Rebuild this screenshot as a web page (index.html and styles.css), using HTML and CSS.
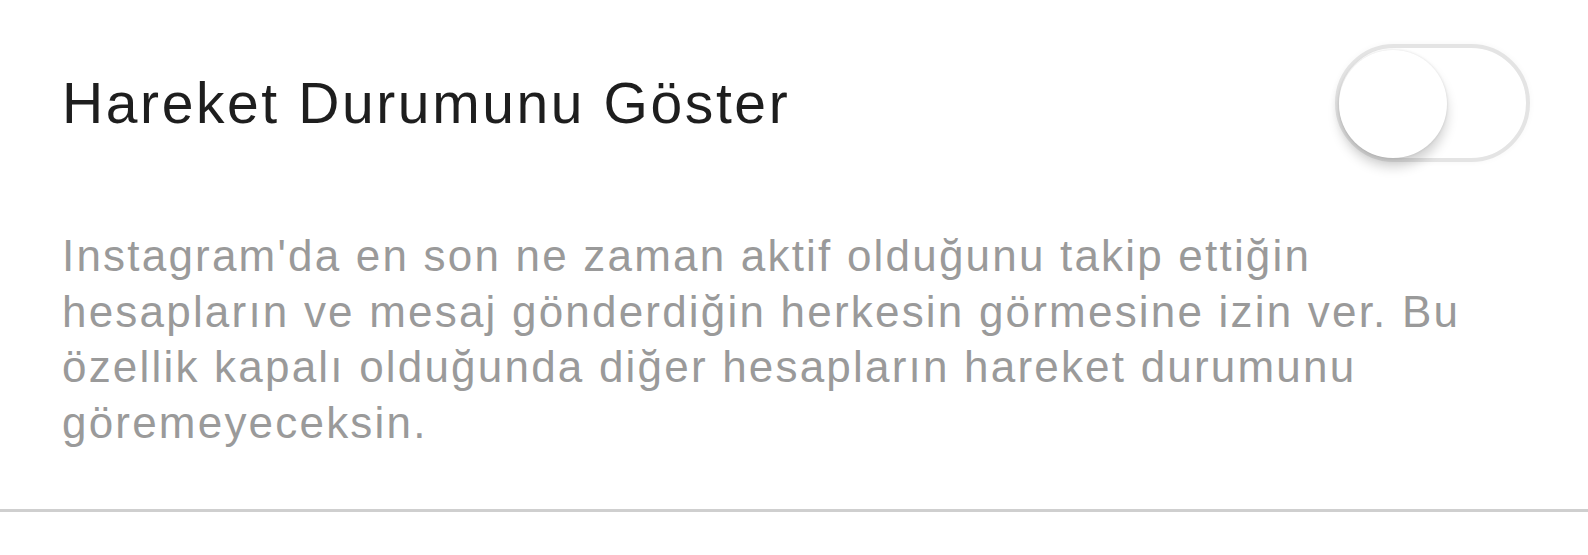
FILE: index.html
```html
<!DOCTYPE html>
<html lang="tr">
<head>
    <title>Hareket Durumu</title>
    <meta charset="UTF-8">
    <meta name="viewport" content="width=device-width, initial-scale=1.0">
    <link rel="stylesheet" href="styles.css">
</head>
<body>
    <div class="setting">
        <div class="setting-row">
            <span class="setting-title">Hareket Durumunu Göster</span>
            <label class="switch">
                <input type="checkbox" id="activity-status">
                <span class="switch-track"><span class="switch-knob"></span></span>
            </label>
        </div>
        <p class="setting-description">
            Instagram'da en son ne zaman aktif olduğunu takip ettiğin<br>
            hesapların ve mesaj gönderdiğin herkesin görmesine izin ver. Bu<br>
            özellik kapalı olduğunda diğer hesapların hareket durumunu<br>
            göremeyeceksin.
        </p>
    </div>
</body>
</html>
```

FILE: styles.css
```css
body, html {
    margin: 0;
    padding: 0;
    box-sizing: border-box;
}

*, *:before, *:after {
    box-sizing: inherit;
}

body {
    font-family: "Liberation Sans", Arial, sans-serif;
    background-color: #fff;
    color: #222;
}

.setting {
    padding: 44px 58px 0 62px;
    border-bottom: 3px solid #cfcfcf;
}

.setting-row {
    display: flex;
    justify-content: space-between;
    align-items: center;
    height: 118px;
}

.setting-title {
    font-size: 57px;
    letter-spacing: 2.6px;
    color: #1e1e1e;
}

.setting-description {
    margin: 66px 0 0;
    padding-bottom: 59px;
    font-size: 44px;
    line-height: 55.5px;
    letter-spacing: 2.2px;
    color: #9a9a9a;
}

/* iOS style switch, shown in the off state */
.switch {
    position: relative;
    display: block;
    width: 195px;
    height: 118px;
    cursor: pointer;
}

.switch input {
    display: none;
}

.switch-track {
    display: block;
    width: 100%;
    height: 100%;
    border: 4px solid #e4e4e4;
    border-radius: 59px;
    background-color: #fff;
    box-shadow: 0 0 6px rgba(0, 0, 0, 0.04);
}

.switch-knob {
    position: absolute;
    left: 4px;
    top: 6px;
    width: 108px;
    height: 108px;
    border-radius: 50%;
    background-color: #fff;
    box-shadow: 0 9px 12px rgba(0, 0, 0, 0.18), 0 0 3px rgba(0, 0, 0, 0.12);
}
```
